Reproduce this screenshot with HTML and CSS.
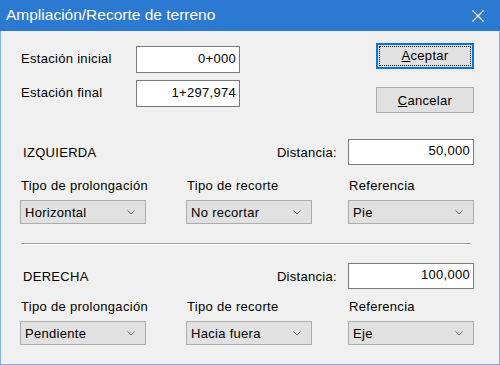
FILE: index.html
```html
<!DOCTYPE html>
<html lang="es">
<head>
  <meta charset="UTF-8" />
  <title>Ampliación/Recorte de terreno</title>
  <link rel="stylesheet" href="styles.css">
</head>
<body>
  <div class="window">
    <header class="titlebar">
      <span class="title">Ampliación/Recorte de terreno</span>
      <svg class="close" width="12" height="12" viewBox="0 0 12 12">
        <path d="M0.5 0.5 L11.5 11.5 M11.5 0.5 L0.5 11.5" stroke="#fff" stroke-width="1.1" fill="none"/>
      </svg>
    </header>

    <main class="dialog">
      <section class="top">
        <div class="stations">
          <div class="field-row">
            <span class="field-label">Estación inicial</span>
            <div class="textbox">0+000</div>
          </div>
          <div class="field-row">
            <span class="field-label">Estación final</span>
            <div class="textbox">1+297,974</div>
          </div>
        </div>
        <div class="buttons">
          <button class="btn btn-default"><span class="focus"><u>A</u>ceptar</span></button>
          <button class="btn"><u>C</u>ancelar</button>
        </div>
      </section>

      <section class="side">
        <div class="side-head">
          <span class="side-name">IZQUIERDA</span>
          <span class="dist-label">Distancia:</span>
          <div class="textbox wide">50,000</div>
        </div>
        <div class="options">
          <span class="opt-label">Tipo de prolongación</span>
          <span class="opt-label">Tipo de recorte</span>
          <span class="opt-label">Referencia</span>
          <div class="combo">Horizontal<svg width="8" height="5" viewBox="0 0 8 5"><path d="M0.5 0.5 L4 4 L7.5 0.5" stroke="#6d6d6d" fill="none"/></svg></div>
          <div class="combo">No recortar<svg width="8" height="5" viewBox="0 0 8 5"><path d="M0.5 0.5 L4 4 L7.5 0.5" stroke="#6d6d6d" fill="none"/></svg></div>
          <div class="combo">Pie<svg width="8" height="5" viewBox="0 0 8 5"><path d="M0.5 0.5 L4 4 L7.5 0.5" stroke="#6d6d6d" fill="none"/></svg></div>
        </div>
      </section>

      <hr class="separator">

      <section class="side side-right">
        <div class="side-head">
          <span class="side-name">DERECHA</span>
          <span class="dist-label">Distancia:</span>
          <div class="textbox wide">100,000</div>
        </div>
        <div class="options">
          <span class="opt-label">Tipo de prolongación</span>
          <span class="opt-label">Tipo de recorte</span>
          <span class="opt-label">Referencia</span>
          <div class="combo">Pendiente<svg width="8" height="5" viewBox="0 0 8 5"><path d="M0.5 0.5 L4 4 L7.5 0.5" stroke="#6d6d6d" fill="none"/></svg></div>
          <div class="combo">Hacia fuera<svg width="8" height="5" viewBox="0 0 8 5"><path d="M0.5 0.5 L4 4 L7.5 0.5" stroke="#6d6d6d" fill="none"/></svg></div>
          <div class="combo">Eje<svg width="8" height="5" viewBox="0 0 8 5"><path d="M0.5 0.5 L4 4 L7.5 0.5" stroke="#6d6d6d" fill="none"/></svg></div>
        </div>
      </section>
    </main>
  </div>
</body>
</html>
```

FILE: styles.css
```css
body {
  margin: 0;
  font-family: 'Liberation Sans', Arial, sans-serif;
  font-size: 13px;
  letter-spacing: 0.3px;
  color: #000;
  background: #f0f0f0;
}

.window {
  width: 500px;
  height: 365px;
  display: flex;
  flex-direction: column;
}

.titlebar {
  height: 31px;
  background-color: #2b79d0;
  color: white;
  display: flex;
  align-items: center;
  justify-content: space-between;
  padding: 0 16px 0 6px;
  flex-shrink: 0;
}

.title {
  font-size: 15.5px;
  letter-spacing: 0;
  margin-top: -1px;
}

.dialog {
  flex: 1;
  background-color: #f0f0f0;
  border: 1px solid #7eb0e6;
  border-top: none;
  padding: 0 25px 0 19px;
}

.top {
  display: flex;
  justify-content: space-between;
  align-items: flex-start;
}

.stations {
  margin-top: 15px;
  display: flex;
  flex-direction: column;
  gap: 7px;
}

.field-row {
  display: flex;
  align-items: center;
}

.field-label {
  width: 115px;
  padding-left: 1px;
  margin-top: -2px;
}

.textbox {
  width: 104px;
  height: 27px;
  box-sizing: border-box;
  background: white;
  border: 1px solid #7a7a7a;
  text-align: right;
  padding: 0 3px;
  line-height: 23px;
}

.textbox.wide {
  width: 126px;
  height: 26px;
  line-height: 22px;
}

.buttons {
  margin-top: 12px;
  display: flex;
  flex-direction: column;
  gap: 18px;
}

.btn {
  width: 98px;
  height: 26px;
  box-sizing: border-box;
  background-color: #e1e1e1;
  border: 1px solid #adadad;
  font-family: inherit;
  font-size: 13px;
  letter-spacing: 0.3px;
  color: #000;
  padding: 0;
  margin: 0;
}

.btn-default {
  border: 2px solid #0078d7;
  padding: 1px;
}

.focus {
  display: block;
  height: 100%;
  box-sizing: border-box;
  border: 1px dotted #000;
  line-height: 18px;
}

.side-head {
  margin-top: 26px;
  display: flex;
  align-items: center;
  height: 26px;
}

.side-name {
  flex: 1;
  padding-left: 3px;
}

.dist-label {
  margin-right: 11px;
}

.options {
  display: grid;
  grid-template-columns: 166px 162px 126px;
  row-gap: 6px;
  margin-top: 13px;
}

.opt-label {
  padding-left: 1px;
  line-height: 16px;
}

.combo {
  width: 126px;
  height: 24px;
  box-sizing: border-box;
  background-color: #e1e1e1;
  border: 1px solid #adadad;
  display: flex;
  align-items: center;
  justify-content: space-between;
  padding: 0 10px 0 4px;
}

.separator {
  margin: 19px 3px 0 1px;
  border: none;
  border-top: 1px solid #a0a0a0;
  border-bottom: 1px solid #fff;
  height: 0;
}

.side-right .side-head {
  margin-top: 18px;
}

.side-right .options {
  margin-top: 10px;
}
```
